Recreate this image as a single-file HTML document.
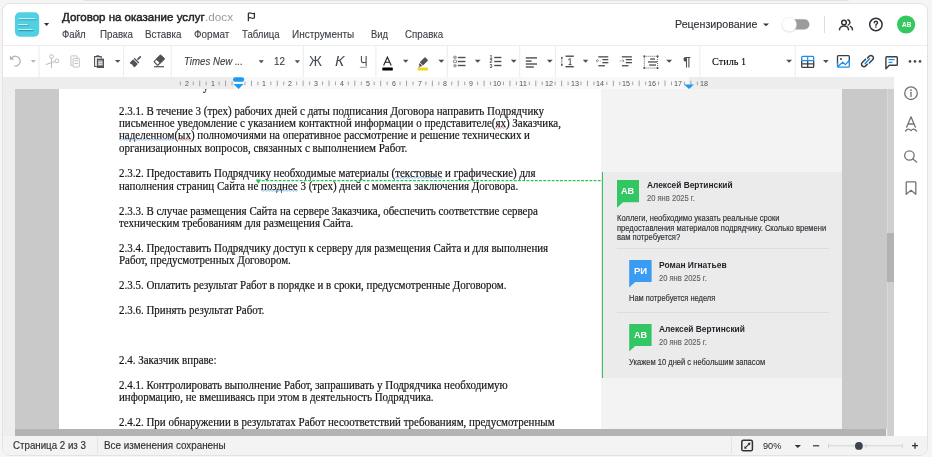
<!DOCTYPE html>
<html><head><meta charset="utf-8">
<style>
html,body{margin:0;padding:0;}
body{width:932px;height:457px;overflow:hidden;background:#f5f5f5;position:relative;font-family:"Liberation Sans",sans-serif;}
.a{position:absolute;}
.t{position:absolute;white-space:pre;line-height:1;transform-origin:0 0;}
</style></head><body>
<div class="a" style="left:84px;top:0;width:765px;height:1.2px;background:#e2e2e2;border-radius:0 0 2px 2px"></div>
<!-- window frame -->
<div class="a" style="left:2px;top:3px;width:924px;height:451px;border:1px solid #e3e3e3;border-radius:8px;background:#fff;overflow:hidden">
  <!-- status bar bg -->
  <div class="a" style="left:0;top:432px;width:924px;height:19px;background:#f3f3f3"></div>
</div>
<!-- toolbar top border -->
<div class="a" style="left:3px;top:45px;width:924px;height:1px;background:#eeeeee"></div>
<!-- ruler band -->
<div class="a" style="left:3px;top:77px;width:891px;height:12px;background:#ededed"></div>
<div class="a" style="left:233.5px;top:77px;width:455px;height:12px;background:#f8f8f8"></div>
<!-- doc bg -->
<div class="a" style="left:3px;top:89px;width:891px;height:347px;background:#eeeeee"></div>
<div class="a" style="left:15px;top:89px;width:872px;height:339.5px;background:#c9c9c9"></div>
<div class="a" style="left:59px;top:89px;width:542px;height:339.5px;background:#ffffff"></div>
<div class="a" style="left:601px;top:89px;width:241px;height:339.5px;background:#f3f3f3"></div>
<div class="a" style="left:601px;top:171.5px;width:241px;height:206px;background:#ebebeb"></div>
<div class="a" style="left:601.5px;top:171.5px;width:1.8px;height:206px;background:#34c061"></div>
<div class="a" style="left:617px;top:248px;width:211.5px;height:1px;background:#dcdcdc"></div>
<div class="a" style="left:617px;top:312px;width:211.5px;height:1px;background:#dcdcdc"></div>
<!-- vertical scroll -->
<div class="a" style="left:887px;top:89px;width:7.4px;height:347px;background:#cfcfcf"></div>
<div class="a" style="left:887px;top:89px;width:1px;height:347px;background:#d9d9d9"></div>
<div class="a" style="left:887px;top:233.3px;width:7.4px;height:48.7px;background:#b2b2b2"></div>
<!-- horizontal scroll -->
<div class="a" style="left:15px;top:428.5px;width:871px;height:7.5px;background:#b3b3b3"></div>
<!-- sidebar -->
<div class="a" style="left:894.4px;top:77px;width:32.6px;height:359px;background:#ffffff"></div>
<!-- doc text layer -->
<div class="a" style="left:0;top:89px;width:601px;height:339.5px;overflow:hidden;will-change:transform">
<div class="t" style="left:203.00px;top:-8.00px;font-family:'Liberation Serif', serif;font-size:11.9px;font-weight:400;font-style:normal;color:#161616;transform:scaleX(0.9218);-webkit-text-stroke:0.2px #161616;">у</div>
<div class="t" style="left:119.00px;top:17.00px;font-family:'Liberation Serif', serif;font-size:11.9px;font-weight:400;font-style:normal;color:#161616;transform:scaleX(0.9218);-webkit-text-stroke:0.2px #161616;">2.3.1. В течение 3 (трех) рабочих дней с даты подписания Договора направить Подрядчику</div>
<div class="t" style="left:119.00px;top:29.00px;font-family:'Liberation Serif', serif;font-size:11.9px;font-weight:400;font-style:normal;color:#161616;transform:scaleX(0.9218);-webkit-text-stroke:0.2px #161616;">письменное уведомление с указанием контактной информации о представителе(<span class="wr">ях</span>) Заказчика,</div>
<div class="t" style="left:119.00px;top:41.00px;font-family:'Liberation Serif', serif;font-size:11.9px;font-weight:400;font-style:normal;color:#161616;transform:scaleX(0.9218);-webkit-text-stroke:0.2px #161616;"><span class="wb">наделенном</span>(<span class="wr">ых</span>) полномочиями на оперативное рассмотрение и решение технических и</div>
<div class="t" style="left:119.00px;top:54.00px;font-family:'Liberation Serif', serif;font-size:11.9px;font-weight:400;font-style:normal;color:#161616;transform:scaleX(0.9218);-webkit-text-stroke:0.2px #161616;">организационных вопросов, связанных с выполнением Работ.</div>
<div class="t" style="left:119.00px;top:79.00px;font-family:'Liberation Serif', serif;font-size:11.9px;font-weight:400;font-style:normal;color:#161616;transform:scaleX(0.9218);-webkit-text-stroke:0.2px #161616;">2.3.2. Предоставить Подрядчику необходимые материалы (<span class="wb">текстовые</span> и графические) для</div>
<div class="t" style="left:119.00px;top:92.00px;font-family:'Liberation Serif', serif;font-size:11.9px;font-weight:400;font-style:normal;color:#161616;transform:scaleX(0.9218);-webkit-text-stroke:0.2px #161616;">наполнения страниц Сайта не <span class="wb">позднее</span> 3 (трех) дней с момента заключения Договора.</div>
<div class="t" style="left:119.00px;top:117.00px;font-family:'Liberation Serif', serif;font-size:11.9px;font-weight:400;font-style:normal;color:#161616;transform:scaleX(0.9218);-webkit-text-stroke:0.2px #161616;">2.3.3. В случае размещения Сайта на сервере Заказчика, обеспечить соответствие сервера</div>
<div class="t" style="left:119.00px;top:129.00px;font-family:'Liberation Serif', serif;font-size:11.9px;font-weight:400;font-style:normal;color:#161616;transform:scaleX(0.9218);-webkit-text-stroke:0.2px #161616;">техническим требованиям для размещения Сайта.</div>
<div class="t" style="left:119.00px;top:154.00px;font-family:'Liberation Serif', serif;font-size:11.9px;font-weight:400;font-style:normal;color:#161616;transform:scaleX(0.9218);-webkit-text-stroke:0.2px #161616;">2.3.4. Предоставить Подрядчику доступ к серверу для размещения Сайта и для выполнения</div>
<div class="t" style="left:119.00px;top:166.00px;font-family:'Liberation Serif', serif;font-size:11.9px;font-weight:400;font-style:normal;color:#161616;transform:scaleX(0.9218);-webkit-text-stroke:0.2px #161616;">Работ, предусмотренных Договором.</div>
<div class="t" style="left:119.00px;top:191.00px;font-family:'Liberation Serif', serif;font-size:11.9px;font-weight:400;font-style:normal;color:#161616;transform:scaleX(0.9218);-webkit-text-stroke:0.2px #161616;">2.3.5. Оплатить результат Работ в порядке и в сроки, предусмотренные Договором.</div>
<div class="t" style="left:119.00px;top:216.00px;font-family:'Liberation Serif', serif;font-size:11.9px;font-weight:400;font-style:normal;color:#161616;transform:scaleX(0.9218);-webkit-text-stroke:0.2px #161616;">2.3.6. Принять результат Работ.</div>
<div class="t" style="left:119.00px;top:266.00px;font-family:'Liberation Serif', serif;font-size:11.9px;font-weight:400;font-style:normal;color:#161616;transform:scaleX(0.9218);-webkit-text-stroke:0.2px #161616;">2.4. Заказчик вправе:</div>
<div class="t" style="left:119.00px;top:291.00px;font-family:'Liberation Serif', serif;font-size:11.9px;font-weight:400;font-style:normal;color:#161616;transform:scaleX(0.9218);-webkit-text-stroke:0.2px #161616;">2.4.1. Контролировать выполнение Работ, запрашивать у Подрядчика необходимую</div>
<div class="t" style="left:119.00px;top:303.00px;font-family:'Liberation Serif', serif;font-size:11.9px;font-weight:400;font-style:normal;color:#161616;transform:scaleX(0.9218);-webkit-text-stroke:0.2px #161616;">информацию, не вмешиваясь при этом в деятельность Подрядчика.</div>
<div class="t" style="left:119.00px;top:328.00px;font-family:'Liberation Serif', serif;font-size:11.9px;font-weight:400;font-style:normal;color:#161616;transform:scaleX(0.9218);-webkit-text-stroke:0.2px #161616;">2.4.2. При обнаружении в результатах Работ несоответствий требованиям, предусмотренным</div>
</div>
<!-- separators -->
<div class="a" style="left:824.2px;top:16px;width:1px;height:17px;background:#dddddd"></div>
<div class="a" style="left:96.8px;top:437px;width:1px;height:16px;background:#e2e2e2"></div>
<div class="a" style="left:730.7px;top:437px;width:1px;height:16px;background:#e2e2e2"></div>
<svg class="a" style="left:0;top:0" width="932" height="457" viewBox="0 0 932 457">
 <g fill="#ececec">
  <rect x="38.6" y="46" width="1" height="31"/><rect x="123.1" y="46" width="1" height="31"/>
  <rect x="170.7" y="46" width="1" height="31"/><rect x="302.8" y="46" width="1" height="31"/>
  <rect x="375.4" y="46" width="1" height="31"/><rect x="446.8" y="46" width="1" height="31"/>
  <rect x="519.2" y="46" width="1" height="31"/><rect x="554.9" y="46" width="1" height="31"/>
  <rect x="699.3" y="46" width="1" height="31"/><rect x="794.7" y="46" width="1" height="31"/>
 </g>
 <!-- logo -->
 <rect x="15" y="12.3" width="24.2" height="24.4" rx="4.8" fill="#52d0e3"/>
 <g stroke-linecap="round">
  <path d="M19 19.6H35.6M19 25.5H28.3M19 30.4H32.8" stroke="#1f8c9c" stroke-width="1.5" opacity="0.75"/>
  <path d="M18.6 18.7H35M18.6 24.6H27.6M18.6 29.5H32.2" stroke="#bdf0f7" stroke-width="1.2"/>
 </g>
 <path d="M44 23H49.2L46.6 25.9Z" fill="#333"/>
 <!-- flag -->
 <path d="M248.4 20.7V13.4Q249.9 12.5 251.4 13.3Q252.9 14.1 254.4 13.3V18Q252.9 18.8 251.4 18Q249.9 17.2 248.4 18" stroke="#2f3337" stroke-width="1.3" fill="none" stroke-linejoin="round" stroke-linecap="round"/>
 <!-- header right -->
 <path d="M763 23.4H769L766 26.2Z" fill="#333"/>
 <rect x="787" y="19.3" width="22.4" height="10.3" rx="5.1" fill="#9c9c9c"/>
 <circle cx="789.2" cy="25" r="7.8" fill="#dcdcdc" opacity="0.6"/><circle cx="789.2" cy="24.6" r="7.3" fill="#e6e6e6"/>
 <circle cx="789.2" cy="24.5" r="6.9" fill="#ffffff"/>
 <g stroke="#2f3337" stroke-width="1.5" fill="none" stroke-linecap="round">
  <circle cx="844" cy="22.5" r="2.3"/>
  <path d="M839.5 29.7A4.5 3.7 0 0 1 848.5 29.7"/>
  <path d="M847.9 19.8A2.8 2.8 0 0 1 848.1 25.1M850.3 26.4Q852.5 27.4 852.5 29.7"/>
  <circle cx="875.9" cy="24.5" r="6.2"/>
  <path d="M874.3 22.8Q874.3 21.2 875.9 21.2Q877.5 21.2 877.5 22.7Q877.5 23.6 876.6 24.1Q875.9 24.5 875.9 25.3" stroke-width="1.4"/>
 </g>
 <circle cx="875.9" cy="27.1" r="0.8" fill="#2f3337"/>
 <circle cx="906.1" cy="24.5" r="9.1" fill="#35c861"/>
 <!-- toolbar icons: disabled -->
 <path d="M11.7 57.9A4.9 4.9 0 1 1 14.5 66.05" stroke="#b3b6ba" fill="none" stroke-width="1.4"/>
 <path d="M9.8 55.4V59.8H14.4Z" fill="#b3b6ba"/>
 <path d="M30.7 60H35.9L33.3 62.8Z" fill="#b3b6ba"/>
 <g stroke="#b9bcc0" fill="none" stroke-width="1">
  <path d="M51.5 58.6V68M45.8 64.6L55 61.5"/>
  <circle cx="51.5" cy="56.5" r="1.9"/><circle cx="56.9" cy="60.8" r="1.9"/>
 </g>
 <g stroke="#c0c3c6" fill="none" stroke-width="1">
  <path d="M72.6 65.5H71Q70.9 65.5 70.9 65V56.4Q70.9 55.9 71.4 55.9H76.6Q77.1 55.9 77.1 56.4V57.9"/>
  <rect x="73.1" y="58.4" width="6.2" height="8.7" rx="0.5"/>
  <path d="M74.4 60.8H78M74.4 63.5H78" stroke-width="1.1"/>
 </g>
<!-- toolbar icons: dark -->
 <g fill="#4a4f55">
  <path d="M114.9 60H120.5L117.7 62.7Z"/>
  <path d="M154.1 66.1H164V67.3H154.1Z"/>
  <path d="M258.6 60.2H263.9L261.25 63.2Z"/>
  <path d="M294.7 60.2H300L297.35 63.2Z"/>
  <path d="M402.9 59.8H408.5L405.7 62.8Z"/>
  <path d="M438.3 59.8H444.3L441.3 62.8Z"/>
  <path d="M474.8 59.8H480.6L477.7 62.8Z"/>
  <path d="M510.8 59.8H516.6L513.7 62.8Z"/>
  <path d="M546.9 59.8H552.7L549.8 62.8Z"/>
  <path d="M582.8 59.8H588.3L585.55 62.8Z"/>
  <path d="M666.2 59.8H672.2L669.2 62.8Z"/>
  <path d="M786.1 59.8H792.1L789.1 62.8Z"/>
  <path d="M823 59.9H828.7L825.85 63Z"/>
 </g>
 <path d="M96.8 66.5H94.6V56.6H101.2V58.6" fill="none" stroke="#4f545a" stroke-width="1.1"/>
 <rect x="96.3" y="55.2" width="2.8" height="1.6" rx="0.5" fill="#4f545a"/>
 <rect x="96.8" y="58.6" width="7.2" height="9.4" fill="#4f545a"/>
 <rect x="98.2" y="60.1" width="4.4" height="5.6" fill="#a9adb1"/>
 <path d="M98.2 62.3H102.6M98.2 64.3H102.6" stroke="#eef0f2" stroke-width="0.8"/>
 <g transform="translate(140.6 56.6) rotate(135)" fill="#4f545a">
  <rect x="-0.4" y="-0.85" width="4.9" height="1.7" rx="0.85"/>
  <rect x="5.1" y="-3.3" width="1.3" height="6.6"/>
  <path d="M7.2 -3.3H11.6L12.2 -1.5L11.6 0.3L12.4 2.2L11.8 3.3H7.2Z"/>
 </g>
 <g transform="translate(159.1 60.3) rotate(-45)">
  <rect x="-4.6" y="-2.6" width="9.2" height="5.2" rx="0.5" fill="#fff" stroke="#4f545a" stroke-width="1.2"/>
  <rect x="-1.6" y="-3.2" width="6.8" height="6.4" rx="0.5" fill="#4f545a"/>
 </g>
 <rect x="359.8" y="66.8" width="7.3" height="1" fill="#9aa0a6"/>
 <path d="M383.6 65.4L387.4 57.2L391.2 65.4M385 62.2H389.8" stroke="#222" stroke-width="1.15" fill="none"/>
 <rect x="382.3" y="67.5" width="10.5" height="3" rx="0.6" fill="#000"/>
 <g transform="translate(423 62.3) rotate(-45)" fill="#4f545a">
  <rect x="-2.3" y="-2.3" width="7.4" height="4.6" rx="0.7"/>
  <path d="M-2.9 -2L-4.9 -1V1.4L-2.9 2Z"/>
  <path d="M-5.3 -0.5L-6.9 0.9L-5.3 1.3Z"/>
 </g>
 <rect x="417.8" y="67.5" width="10.1" height="3" fill="#f9d31b"/>
 <g fill="#4a4f55">
  <rect x="457.9" y="56.8" width="7.6" height="1.4"/><rect x="457.9" y="60.8" width="7.6" height="1.4"/><rect x="457.9" y="64.8" width="7.6" height="1.4"/>
  <rect x="494.2" y="56.8" width="7.2" height="1.4"/><rect x="494.2" y="60.8" width="7.2" height="1.4"/><rect x="494.2" y="64.8" width="7.2" height="1.4"/>
  <rect x="525.8" y="57.2" width="11.2" height="1.4"/><rect x="525.8" y="60.4" width="5.8" height="1.4"/><rect x="525.8" y="63.3" width="11.2" height="1.4"/><rect x="525.8" y="66.3" width="8" height="1.4"/>
  <rect x="565.5" y="55.5" width="8.3" height="1.4"/><rect x="565.5" y="66" width="8.3" height="1.4"/>
  <rect x="598.3" y="56.2" width="10" height="1.3"/><rect x="602.4" y="59" width="5.9" height="1.3"/><rect x="602.4" y="62" width="5.9" height="1.3"/><rect x="598.3" y="65.1" width="6.6" height="1.3"/>
  <rect x="621.9" y="56.2" width="10" height="1.3"/><rect x="625.8" y="59" width="6.1" height="1.3"/><rect x="625.8" y="62" width="6.1" height="1.3"/><rect x="621.9" y="65.1" width="6.6" height="1.3"/>
  <rect x="650.2" y="58.4" width="4.8" height="1.3"/><rect x="648" y="61.3" width="9" height="1.3"/><rect x="649.2" y="64.4" width="6.8" height="1.3"/>
  <circle cx="910" cy="61.4" r="1.35"/><circle cx="915" cy="61.4" r="1.35"/><circle cx="920" cy="61.4" r="1.35"/>
 </g>
 <rect x="561.1" y="56.9" width="1.5" height="1.9" fill="#4a4f55"/><rect x="561.1" y="64" width="1.5" height="1.9" fill="#4a4f55"/><path d="M561.85 58.8V64" stroke="#8d9196" stroke-width="0.9"/>
 <path d="M568.2 59.9L570.2 58.4V64.5M568.6 64.6H571.6" stroke="#4a4f55" stroke-width="1" fill="none"/>
 <circle cx="455" cy="57.2" r="1.8" fill="#9ea2a6"/><rect x="453.4" y="60.1" width="3.2" height="2.6" rx="0.4" fill="none" stroke="#7d8186" stroke-width="0.9"/><circle cx="455" cy="65.8" r="1.8" fill="#9ea2a6"/>
 <g font-family="Liberation Sans" font-size="5.4" font-weight="700" fill="#4a4f55"><text x="489.4" y="59.2">1</text><text x="489.4" y="63.4">2</text><text x="489.4" y="67.6">3</text></g>
 <path d="M596.2 60.8H600.6M619.6 60.8H624" stroke="#8a8e93" stroke-width="0.9" stroke-dasharray="1 0.8"/>
 <path d="M597.8 59.6L596.2 60.8L597.8 62M622.4 59.6L624 60.8L622.4 62" stroke="#6a6e73" stroke-width="0.8" fill="none"/>
 <rect x="644.3" y="56.3" width="13.3" height="11.7" fill="none" stroke="#4a4f55" stroke-width="0.9" stroke-dasharray="1 1"/>
 <path d="M643.3 56.3h2M656.6 56.3h2M643.3 68h2M656.6 68h2M644.3 55.3v2M657.6 55.3v2M644.3 67v2M657.6 67v2" stroke="#4a4f55" stroke-width="1"/>
 <!-- table -->
 <path d="M801.7 60.4V66.4Q801.7 67.3 802.6 67.3H812.8Q813.7 67.3 813.7 66.4V60.4M801.7 63.8H813.7M807.7 60.4V67.3" stroke="#3a3f45" stroke-width="1.3" fill="none"/>
 <rect x="801.7" y="56.4" width="12" height="4.2" rx="1" fill="none" stroke="#1e8ee6" stroke-width="1.3"/>
 <path d="M807.7 56.4V60.4" stroke="#1e8ee6" stroke-width="1.2"/>
 <!-- image -->
 <path d="M837.5 63.5V56.6Q837.5 55.7 838.4 55.7H848.4Q849.3 55.7 849.3 56.6V62" stroke="#3a3f45" stroke-width="1.3" fill="none"/>
 <circle cx="841" cy="59" r="1" fill="#3a3f45"/>
 <path d="M837.5 62.5V66.2Q837.5 67.1 838.4 67.1H848.4Q849.3 67.1 849.3 66.2V60.5L845.3 64.6L842.8 62.2L837.5 66.8" stroke="#1e8ee6" stroke-width="1.3" fill="none" stroke-linejoin="round"/>
 <!-- link -->
 <path d="M865.6 59.2L862.3 62.5Q860.6 64.2 862.3 65.9Q864 67.6 865.7 65.9L867.3 64.3M869.3 63L872.6 59.7Q874.3 58 872.6 56.3Q870.9 54.6 869.2 56.3L867.6 57.9" stroke="#3a3f45" stroke-width="1.5" fill="none" stroke-linecap="round"/>
 <path d="M865.2 63.6L869.6 58.8" stroke="#1e8ee6" stroke-width="1.5" stroke-linecap="round"/>
 <!-- comment -->
 <path d="M885.9 68.8V57.6Q885.9 56.7 886.8 56.7H896.4Q897.3 56.7 897.3 57.6V64.4Q897.3 65.3 896.4 65.3H889.3Z" stroke="#3a3f45" stroke-width="1.4" fill="none" stroke-linejoin="round"/>
 <path d="M888.6 59.6H894.6M888.6 62.4H892.4" stroke="#1e8ee6" stroke-width="1.4"/>
 <!-- ruler ticks -->
 <g fill="#a3a3a3"><rect x="179.84" y="81.6" width="1" height="3.6"/><rect x="192.76" y="81.6" width="1" height="3.6"/><rect x="199.22" y="80.6" width="1" height="5.6"/><rect x="205.69" y="81.6" width="1" height="3.6"/><rect x="218.61" y="81.6" width="1" height="3.6"/><rect x="225.07" y="80.6" width="1" height="5.6"/><rect x="231.54" y="81.6" width="1" height="3.6"/><rect x="244.46" y="81.6" width="1" height="3.6"/><rect x="250.93" y="80.6" width="1" height="5.6"/><rect x="257.39" y="81.6" width="1" height="3.6"/><rect x="270.31" y="81.6" width="1" height="3.6"/><rect x="276.77" y="80.6" width="1" height="5.6"/><rect x="283.24" y="81.6" width="1" height="3.6"/><rect x="296.16" y="81.6" width="1" height="3.6"/><rect x="302.62" y="80.6" width="1" height="5.6"/><rect x="309.09" y="81.6" width="1" height="3.6"/><rect x="322.01" y="81.6" width="1" height="3.6"/><rect x="328.48" y="80.6" width="1" height="5.6"/><rect x="334.94" y="81.6" width="1" height="3.6"/><rect x="347.86" y="81.6" width="1" height="3.6"/><rect x="354.32" y="80.6" width="1" height="5.6"/><rect x="360.79" y="81.6" width="1" height="3.6"/><rect x="373.71" y="81.6" width="1" height="3.6"/><rect x="380.18" y="80.6" width="1" height="5.6"/><rect x="386.64" y="81.6" width="1" height="3.6"/><rect x="399.56" y="81.6" width="1" height="3.6"/><rect x="406.02" y="80.6" width="1" height="5.6"/><rect x="412.49" y="81.6" width="1" height="3.6"/><rect x="425.41" y="81.6" width="1" height="3.6"/><rect x="431.88" y="80.6" width="1" height="5.6"/><rect x="438.34" y="81.6" width="1" height="3.6"/><rect x="451.26" y="81.6" width="1" height="3.6"/><rect x="457.73" y="80.6" width="1" height="5.6"/><rect x="464.19" y="81.6" width="1" height="3.6"/><rect x="477.11" y="81.6" width="1" height="3.6"/><rect x="483.58" y="80.6" width="1" height="5.6"/><rect x="490.04" y="81.6" width="1" height="3.6"/><rect x="502.96" y="81.6" width="1" height="3.6"/><rect x="509.43" y="80.6" width="1" height="5.6"/><rect x="515.89" y="81.6" width="1" height="3.6"/><rect x="528.81" y="81.6" width="1" height="3.6"/><rect x="535.28" y="80.6" width="1" height="5.6"/><rect x="541.74" y="81.6" width="1" height="3.6"/><rect x="554.66" y="81.6" width="1" height="3.6"/><rect x="561.12" y="80.6" width="1" height="5.6"/><rect x="567.59" y="81.6" width="1" height="3.6"/><rect x="580.51" y="81.6" width="1" height="3.6"/><rect x="586.98" y="80.6" width="1" height="5.6"/><rect x="593.44" y="81.6" width="1" height="3.6"/><rect x="606.36" y="81.6" width="1" height="3.6"/><rect x="612.83" y="80.6" width="1" height="5.6"/><rect x="619.29" y="81.6" width="1" height="3.6"/><rect x="632.21" y="81.6" width="1" height="3.6"/><rect x="638.67" y="80.6" width="1" height="5.6"/><rect x="645.14" y="81.6" width="1" height="3.6"/><rect x="658.06" y="81.6" width="1" height="3.6"/><rect x="664.53" y="80.6" width="1" height="5.6"/><rect x="670.99" y="81.6" width="1" height="3.6"/><rect x="683.91" y="81.6" width="1" height="3.6"/><rect x="690.38" y="80.6" width="1" height="5.6"/><rect x="696.84" y="81.6" width="1" height="3.6"/></g>
 <!-- indent markers -->
 <rect x="233" y="77.3" width="11.2" height="4.4" rx="2.2" fill="#1a9bf0"/>
 <path d="M233.5 84.1H243.6L238.55 88.9Z" fill="#1a9bf0"/>
 <path d="M684 84.6H694L689 88.9Z" fill="#1a9bf0"/>
 <path d="M495.41 127.80Q496.16 126.90 496.91 127.80Q497.66 128.70 498.41 127.80Q499.16 126.90 499.91 127.80Q500.66 128.70 501.41 127.80Q502.16 126.90 502.91 127.80Q503.66 128.70 504.41 127.80Q505.16 126.90 505.91 127.80" stroke="#e46a6a" stroke-width="0.8" fill="none"/>
<path d="M119.00 139.80Q119.75 138.90 120.50 139.80Q121.25 140.70 122.00 139.80Q122.75 138.90 123.50 139.80Q124.25 140.70 125.00 139.80Q125.75 138.90 126.50 139.80Q127.25 140.70 128.00 139.80Q128.75 138.90 129.50 139.80Q130.25 140.70 131.00 139.80Q131.75 138.90 132.50 139.80Q133.25 140.70 134.00 139.80Q134.75 138.90 135.50 139.80Q136.25 140.70 137.00 139.80Q137.75 138.90 138.50 139.80Q139.25 140.70 140.00 139.80Q140.75 138.90 141.50 139.80Q142.25 140.70 143.00 139.80Q143.75 138.90 144.50 139.80Q145.25 140.70 146.00 139.80Q146.75 138.90 147.50 139.80Q148.25 140.70 149.00 139.80Q149.75 138.90 150.50 139.80Q151.25 140.70 152.00 139.80Q152.75 138.90 153.50 139.80Q154.25 140.70 155.00 139.80Q155.75 138.90 156.50 139.80Q157.25 140.70 158.00 139.80Q158.75 138.90 159.50 139.80Q160.25 140.70 161.00 139.80Q161.75 138.90 162.50 139.80Q163.25 140.70 164.00 139.80Q164.75 138.90 165.50 139.80Q166.25 140.70 167.00 139.80Q167.75 138.90 168.50 139.80Q169.25 140.70 170.00 139.80Q170.75 138.90 171.50 139.80Q172.25 140.70 173.00 139.80Q173.73 138.90 174.45 139.80" stroke="#6fa8ea" stroke-width="0.8" fill="none"/>
<path d="M178.11 139.80Q178.86 138.90 179.61 139.80Q180.36 140.70 181.11 139.80Q181.86 138.90 182.61 139.80Q183.36 140.70 184.11 139.80Q184.86 138.90 185.61 139.80Q186.36 140.70 187.11 139.80Q187.86 138.90 188.61 139.80Q189.36 140.70 190.11 139.80Q190.53 138.90 190.96 139.80" stroke="#e46a6a" stroke-width="0.8" fill="none"/>
<path d="M395.18 177.80Q395.93 176.90 396.68 177.80Q397.43 178.70 398.18 177.80Q398.93 176.90 399.68 177.80Q400.43 178.70 401.18 177.80Q401.93 176.90 402.68 177.80Q403.43 178.70 404.18 177.80Q404.93 176.90 405.68 177.80Q406.43 178.70 407.18 177.80Q407.93 176.90 408.68 177.80Q409.43 178.70 410.18 177.80Q410.93 176.90 411.68 177.80Q412.43 178.70 413.18 177.80Q413.93 176.90 414.68 177.80Q415.43 178.70 416.18 177.80Q416.93 176.90 417.68 177.80Q418.43 178.70 419.18 177.80Q419.93 176.90 420.68 177.80Q421.43 178.70 422.18 177.80Q422.93 176.90 423.68 177.80Q424.43 178.70 425.18 177.80Q425.93 176.90 426.68 177.80Q427.43 178.70 428.18 177.80Q428.93 176.90 429.68 177.80Q430.43 178.70 431.18 177.80Q431.93 176.90 432.68 177.80Q433.43 178.70 434.18 177.80Q434.93 176.90 435.68 177.80Q436.43 178.70 437.18 177.80Q437.93 176.90 438.68 177.80Q439.43 178.70 440.18 177.80Q440.93 176.90 441.68 177.80Q441.99 178.70 442.29 177.80" stroke="#6fa8ea" stroke-width="0.8" fill="none"/>
<path d="M261.01 190.80Q261.76 189.90 262.51 190.80Q263.26 191.70 264.01 190.80Q264.76 189.90 265.51 190.80Q266.26 191.70 267.01 190.80Q267.76 189.90 268.51 190.80Q269.26 191.70 270.01 190.80Q270.76 189.90 271.51 190.80Q272.26 191.70 273.01 190.80Q273.76 189.90 274.51 190.80Q275.26 191.70 276.01 190.80Q276.76 189.90 277.51 190.80Q278.26 191.70 279.01 190.80Q279.76 189.90 280.51 190.80Q281.26 191.70 282.01 190.80Q282.76 189.90 283.51 190.80Q284.26 191.70 285.01 190.80Q285.76 189.90 286.51 190.80Q287.26 191.70 288.01 190.80Q288.76 189.90 289.51 190.80Q290.26 191.70 291.01 190.80Q291.76 189.90 292.51 190.80Q293.26 191.70 294.01 190.80Q294.76 189.90 295.51 190.80Q296.26 191.70 297.01 190.80Q297.34 189.90 297.67 190.80" stroke="#6fa8ea" stroke-width="0.8" fill="none"/>
 <!-- comment anchor -->
 <path d="M261.9 180.6H601.5" stroke="#25c550" stroke-width="1.1" stroke-dasharray="2.8 1.4"/>
 <path d="M255.6 179.6H261.1L258.35 183.8Z" fill="#25c550"/>
 <!-- avatars -->
 <path d="M617 180H639V202.2H623L617 207.8Z" fill="#33c764"/>
 <path d="M629.2 260H651.6V282H635.2L629.2 287.4Z" fill="#3a9bf3"/>
 <path d="M629.2 324H651.6V346.1H635.2L629.2 351.4Z" fill="#33c764"/>
 <!-- sidebar icons -->
 <g stroke="#6f7479" fill="none" stroke-width="1.3" stroke-linecap="round" stroke-linejoin="round">
  <circle cx="911" cy="93.2" r="6.3"/>
  <path d="M911 92.3V96.4"/>
  <path d="M906.6 127.2L911 116.8L915.4 127.2M908 124H914"/>
  <path d="M905.6 131Q908.3 127.4 911 130.6Q913.7 127.4 916.4 131"/>
  <circle cx="909.4" cy="155.5" r="4.7"/>
  <path d="M912.8 158.9L916.6 162"/>
  <path d="M906.2 194.3V182.6Q906.2 181.8 907 181.8H915Q915.8 181.8 915.8 182.6V194.3L911 190.3Z"/>
 </g>
 <circle cx="911" cy="90.2" r="0.9" fill="#6f7479"/>
 <!-- status bar icons -->
 <rect x="741.8" y="440.2" width="10.6" height="10.6" rx="1.6" fill="none" stroke="#2f3337" stroke-width="1.5"/>
 <path d="M745.2 447.8L749.4 443.6" stroke="#2f3337" stroke-width="1.1" fill="none"/><path d="M744.2 448.8L744.6 446L747 448.4Z M750.4 442.6L750 445.4L747.6 443Z" fill="#2f3337"/>
 <path d="M794.7 445H801L797.85 448Z" fill="#2f3337"/>
 <path d="M813 445.8H819.2" stroke="#2f3337" stroke-width="1.2"/>
 <path d="M828.2 445.8H902.3M866 443.6V448M902.3 443.6V448M828.6 443.6V448" stroke="#d2d2d2" stroke-width="1"/>
 <circle cx="858.9" cy="445.9" r="3.9" fill="#3b4450"/>
 <path d="M912 445.7H918M915 442.7V448.7" stroke="#2f3337" stroke-width="1.3"/>
</svg>
<div class="a" style="left:0;top:0;width:932px;height:457px;will-change:transform">
<div class="t" style="left:62.30px;top:12.00px;font-family:'Liberation Sans', sans-serif;font-size:11.4px;font-weight:400;font-style:normal;color:#1f1f1f;transform:scaleX(1.0105);-webkit-text-stroke:0.45px #1f1f1f;">Договор на оказание услуг</div>
<div class="t" style="left:205.20px;top:12.00px;font-family:'Liberation Sans', sans-serif;font-size:11.4px;font-weight:400;font-style:normal;color:#9a9a9a;transform:scaleX(1.0281);">.docx</div>
<div class="t" style="left:62.30px;top:29.00px;font-family:'Liberation Sans', sans-serif;font-size:10.5px;font-weight:400;font-style:normal;color:#3d4247;transform:scaleX(0.9137);-webkit-text-stroke:0.12px #3d4247;">Файл</div>
<div class="t" style="left:99.60px;top:29.00px;font-family:'Liberation Sans', sans-serif;font-size:10.5px;font-weight:400;font-style:normal;color:#3d4247;transform:scaleX(0.9304);-webkit-text-stroke:0.12px #3d4247;">Правка</div>
<div class="t" style="left:145.00px;top:29.00px;font-family:'Liberation Sans', sans-serif;font-size:10.5px;font-weight:400;font-style:normal;color:#3d4247;transform:scaleX(0.9351);-webkit-text-stroke:0.12px #3d4247;">Вставка</div>
<div class="t" style="left:194.00px;top:29.00px;font-family:'Liberation Sans', sans-serif;font-size:10.5px;font-weight:400;font-style:normal;color:#3d4247;transform:scaleX(0.9487);-webkit-text-stroke:0.12px #3d4247;">Формат</div>
<div class="t" style="left:242.30px;top:29.00px;font-family:'Liberation Sans', sans-serif;font-size:10.5px;font-weight:400;font-style:normal;color:#3d4247;transform:scaleX(0.9157);-webkit-text-stroke:0.12px #3d4247;">Таблица</div>
<div class="t" style="left:292.40px;top:29.00px;font-family:'Liberation Sans', sans-serif;font-size:10.5px;font-weight:400;font-style:normal;color:#3d4247;transform:scaleX(0.9498);-webkit-text-stroke:0.12px #3d4247;">Инструменты</div>
<div class="t" style="left:371.00px;top:29.00px;font-family:'Liberation Sans', sans-serif;font-size:10.5px;font-weight:400;font-style:normal;color:#3d4247;transform:scaleX(0.8947);-webkit-text-stroke:0.12px #3d4247;">Вид</div>
<div class="t" style="left:404.50px;top:29.00px;font-family:'Liberation Sans', sans-serif;font-size:10.5px;font-weight:400;font-style:normal;color:#3d4247;transform:scaleX(0.9271);-webkit-text-stroke:0.12px #3d4247;">Справка</div>
<div class="t" style="left:674.60px;top:19.00px;font-family:'Liberation Sans', sans-serif;font-size:10.5px;font-weight:400;font-style:normal;color:#2d3237;transform:scaleX(1.0163);-webkit-text-stroke:0.12px #2d3237;">Рецензирование</div>
<div class="t" style="left:901.50px;top:21.00px;font-family:'Liberation Sans', sans-serif;font-size:7.8px;font-weight:700;font-style:normal;color:#ffffff;transform:scaleX(0.8255);">AB</div>
<div class="t" style="left:183.80px;top:56.00px;font-family:'Liberation Sans', sans-serif;font-size:10.5px;font-weight:400;font-style:italic;color:#3d4247;transform:scaleX(0.9205);-webkit-text-stroke:0.12px #3d4247;">Times New ...</div>
<div class="t" style="left:273.60px;top:56.00px;font-family:'Liberation Sans', sans-serif;font-size:10.5px;font-weight:400;font-style:normal;color:#3d4247;transform:scaleX(0.9326);-webkit-text-stroke:0.12px #3d4247;">12</div>
<div class="t" style="left:309.30px;top:54.00px;font-family:'Liberation Sans', sans-serif;font-size:14px;font-weight:400;font-style:normal;color:#444c55;transform:scaleX(0.9971);">Ж</div>
<div class="t" style="left:334.60px;top:54.00px;font-family:'Liberation Sans', sans-serif;font-size:14px;font-weight:400;font-style:italic;color:#444c55;transform:scaleX(1.1251);">К</div>
<div class="t" style="left:359.60px;top:54.00px;font-family:'Liberation Sans', sans-serif;font-size:14px;font-weight:400;font-style:normal;color:#444c55;transform:scaleX(0.8134);">Ч</div>
<div class="t" style="left:682.50px;top:56.00px;font-family:'Liberation Sans', sans-serif;font-size:12.5px;font-weight:700;font-style:normal;color:#4a4f55;transform:scaleX(1.1218);">¶</div>
<div class="t" style="left:711.80px;top:56.00px;font-family:'Liberation Serif', serif;font-size:11.4px;font-weight:400;font-style:normal;color:#000;transform:scaleX(0.8985);-webkit-text-stroke:0.1px #000;">Стиль 1</div>
<div class="t" style="left:184.85px;top:80.00px;font-family:'Liberation Sans', sans-serif;font-size:7.8px;font-weight:400;font-style:normal;color:#505458;transform:scaleX(0.8978);">2</div>
<div class="t" style="left:210.70px;top:80.00px;font-family:'Liberation Sans', sans-serif;font-size:7.8px;font-weight:400;font-style:normal;color:#505458;transform:scaleX(0.8978);">1</div>
<div class="t" style="left:262.40px;top:80.00px;font-family:'Liberation Sans', sans-serif;font-size:7.8px;font-weight:400;font-style:normal;color:#505458;transform:scaleX(0.8978);">1</div>
<div class="t" style="left:288.25px;top:80.00px;font-family:'Liberation Sans', sans-serif;font-size:7.8px;font-weight:400;font-style:normal;color:#505458;transform:scaleX(0.8978);">2</div>
<div class="t" style="left:314.10px;top:80.00px;font-family:'Liberation Sans', sans-serif;font-size:7.8px;font-weight:400;font-style:normal;color:#505458;transform:scaleX(0.8978);">3</div>
<div class="t" style="left:339.95px;top:80.00px;font-family:'Liberation Sans', sans-serif;font-size:7.8px;font-weight:400;font-style:normal;color:#505458;transform:scaleX(0.8978);">4</div>
<div class="t" style="left:365.80px;top:80.00px;font-family:'Liberation Sans', sans-serif;font-size:7.8px;font-weight:400;font-style:normal;color:#505458;transform:scaleX(0.8978);">5</div>
<div class="t" style="left:391.65px;top:80.00px;font-family:'Liberation Sans', sans-serif;font-size:7.8px;font-weight:400;font-style:normal;color:#505458;transform:scaleX(0.8978);">6</div>
<div class="t" style="left:417.50px;top:80.00px;font-family:'Liberation Sans', sans-serif;font-size:7.8px;font-weight:400;font-style:normal;color:#505458;transform:scaleX(0.8978);">7</div>
<div class="t" style="left:443.35px;top:80.00px;font-family:'Liberation Sans', sans-serif;font-size:7.8px;font-weight:400;font-style:normal;color:#505458;transform:scaleX(0.8978);">8</div>
<div class="t" style="left:469.20px;top:80.00px;font-family:'Liberation Sans', sans-serif;font-size:7.8px;font-weight:400;font-style:normal;color:#505458;transform:scaleX(0.8978);">9</div>
<div class="t" style="left:493.00px;top:80.00px;font-family:'Liberation Sans', sans-serif;font-size:7.8px;font-weight:400;font-style:normal;color:#505458;transform:scaleX(0.9209);">10</div>
<div class="t" style="left:518.85px;top:80.00px;font-family:'Liberation Sans', sans-serif;font-size:7.8px;font-weight:400;font-style:normal;color:#505458;transform:scaleX(0.9884);">11</div>
<div class="t" style="left:544.70px;top:80.00px;font-family:'Liberation Sans', sans-serif;font-size:7.8px;font-weight:400;font-style:normal;color:#505458;transform:scaleX(0.9209);">12</div>
<div class="t" style="left:570.55px;top:80.00px;font-family:'Liberation Sans', sans-serif;font-size:7.8px;font-weight:400;font-style:normal;color:#505458;transform:scaleX(0.9209);">13</div>
<div class="t" style="left:596.40px;top:80.00px;font-family:'Liberation Sans', sans-serif;font-size:7.8px;font-weight:400;font-style:normal;color:#505458;transform:scaleX(0.9209);">14</div>
<div class="t" style="left:622.25px;top:80.00px;font-family:'Liberation Sans', sans-serif;font-size:7.8px;font-weight:400;font-style:normal;color:#505458;transform:scaleX(0.9209);">15</div>
<div class="t" style="left:648.10px;top:80.00px;font-family:'Liberation Sans', sans-serif;font-size:7.8px;font-weight:400;font-style:normal;color:#505458;transform:scaleX(0.9209);">16</div>
<div class="t" style="left:673.95px;top:80.00px;font-family:'Liberation Sans', sans-serif;font-size:7.8px;font-weight:400;font-style:normal;color:#505458;transform:scaleX(0.9209);">17</div>
<div class="t" style="left:699.80px;top:80.00px;font-family:'Liberation Sans', sans-serif;font-size:7.8px;font-weight:400;font-style:normal;color:#505458;transform:scaleX(0.9209);">18</div>
<div class="t" style="left:621.40px;top:187.00px;font-family:'Liberation Sans', sans-serif;font-size:9px;font-weight:700;font-style:normal;color:#fff;transform:scaleX(1.0154);">АВ</div>
<div class="t" style="left:646.70px;top:181.00px;font-family:'Liberation Sans', sans-serif;font-size:9px;font-weight:700;font-style:normal;color:#1e2328;transform:scaleX(0.9267);">Алексей Вертинский</div>
<div class="t" style="left:646.70px;top:194.00px;font-family:'Liberation Sans', sans-serif;font-size:8.6px;font-weight:400;font-style:normal;color:#5c6166;transform:scaleX(0.8806);-webkit-text-stroke:0.12px #5c6166;">20 янв 2025 г.</div>
<div class="t" style="left:617.00px;top:214.00px;font-family:'Liberation Sans', sans-serif;font-size:8.8px;font-weight:400;font-style:normal;color:#2b3035;transform:scaleX(0.8611);-webkit-text-stroke:0.15px #2b3035;">Коллеги, необходимо указать реальные сроки</div>
<div class="t" style="left:617.00px;top:224.00px;font-family:'Liberation Sans', sans-serif;font-size:8.8px;font-weight:400;font-style:normal;color:#2b3035;transform:scaleX(0.8612);-webkit-text-stroke:0.15px #2b3035;">предоставления материалов подрядчику. Сколько времени</div>
<div class="t" style="left:617.00px;top:233.00px;font-family:'Liberation Sans', sans-serif;font-size:8.8px;font-weight:400;font-style:normal;color:#2b3035;transform:scaleX(0.8672);-webkit-text-stroke:0.15px #2b3035;">вам потребуется?</div>
<div class="t" style="left:633.60px;top:267.00px;font-family:'Liberation Sans', sans-serif;font-size:9px;font-weight:700;font-style:normal;color:#fff;transform:scaleX(1.0573);">РИ</div>
<div class="t" style="left:658.90px;top:261.00px;font-family:'Liberation Sans', sans-serif;font-size:9px;font-weight:700;font-style:normal;color:#1e2328;transform:scaleX(0.9418);">Роман Игнатьев</div>
<div class="t" style="left:658.90px;top:274.00px;font-family:'Liberation Sans', sans-serif;font-size:8.6px;font-weight:400;font-style:normal;color:#5c6166;transform:scaleX(0.8806);-webkit-text-stroke:0.12px #5c6166;">20 янв 2025 г.</div>
<div class="t" style="left:629.20px;top:294.00px;font-family:'Liberation Sans', sans-serif;font-size:8.8px;font-weight:400;font-style:normal;color:#2b3035;transform:scaleX(0.8512);-webkit-text-stroke:0.15px #2b3035;">Нам потребуется неделя</div>
<div class="t" style="left:633.60px;top:331.00px;font-family:'Liberation Sans', sans-serif;font-size:9px;font-weight:700;font-style:normal;color:#fff;transform:scaleX(1.0154);">АВ</div>
<div class="t" style="left:658.90px;top:325.00px;font-family:'Liberation Sans', sans-serif;font-size:9px;font-weight:700;font-style:normal;color:#1e2328;transform:scaleX(0.9299);">Алексей Вертинский</div>
<div class="t" style="left:658.90px;top:338.00px;font-family:'Liberation Sans', sans-serif;font-size:8.6px;font-weight:400;font-style:normal;color:#5c6166;transform:scaleX(0.8806);-webkit-text-stroke:0.12px #5c6166;">20 янв 2025 г.</div>
<div class="t" style="left:629.20px;top:358.00px;font-family:'Liberation Sans', sans-serif;font-size:8.8px;font-weight:400;font-style:normal;color:#2b3035;transform:scaleX(0.8598);-webkit-text-stroke:0.15px #2b3035;">Укажем 10 дней с небольшим запасом</div>
<div class="t" style="left:13.40px;top:440.00px;font-family:'Liberation Sans', sans-serif;font-size:10.5px;font-weight:400;font-style:normal;color:#2b3035;transform:scaleX(0.9263);-webkit-text-stroke:0.15px #2b3035;">Страница 2 из 3</div>
<div class="t" style="left:104.30px;top:440.00px;font-family:'Liberation Sans', sans-serif;font-size:10.5px;font-weight:400;font-style:normal;color:#2b3035;transform:scaleX(0.9379);-webkit-text-stroke:0.15px #2b3035;">Все изменения сохранены</div>
<div class="t" style="left:762.60px;top:441.00px;font-family:'Liberation Sans', sans-serif;font-size:9.8px;font-weight:400;font-style:normal;color:#1e1e1e;transform:scaleX(0.9383);">90%</div>
</div>
</body></html>
